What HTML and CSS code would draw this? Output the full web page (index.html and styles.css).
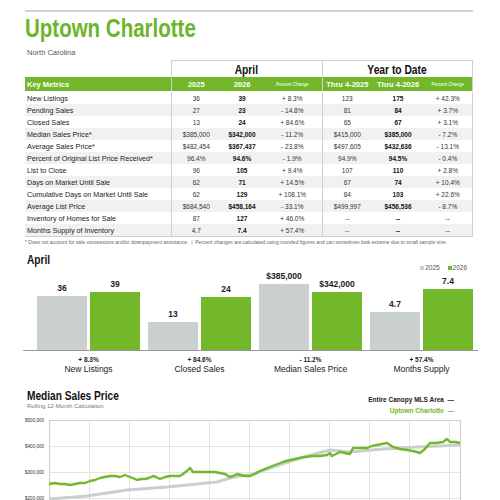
FILE: index.html
```html
<!DOCTYPE html>
<html lang="en">
<head>
    <meta charset="UTF-8">
    <title>Uptown Charlotte</title>
    <link rel="stylesheet" href="styles.css">
</head>
<body>
<div class="page">
    <div class="topline"></div>
    <h1 class="titulo"><span class="cond">Uptown Charlotte</span></h1>
    <div class="estado">North Carolina</div>

    <table class="metricas">
        <colgroup>
            <col class="c-label">
            <col class="c-a1"><col class="c-a2"><col class="c-a3">
            <col class="c-y1"><col class="c-y2"><col class="c-y3">
        </colgroup>
        <tr class="grupo">
            <th class="vacio"></th>
            <th colspan="3" class="caja"><span class="cond">April</span></th>
            <th colspan="3" class="caja"><span class="cond">Year to Date</span></th>
        </tr>
        <tr class="verde">
            <th class="km">Key Metrics</th>
            <th class="izq">2025</th><th>2026</th><th class="pc">Percent Change</th>
            <th class="izq">Thru 4-2025</th><th>Thru 4-2026</th><th class="pc der">Percent Change</th>
        </tr>
        <tr><td class="lbl">New Listings</td><td class="izq">36</td><td class="b">39</td><td>+ 8.3%</td><td class="izq">123</td><td class="b">175</td><td class="der">+ 42.3%</td></tr>
        <tr class="gris"><td class="lbl">Pending Sales</td><td class="izq">27</td><td class="b">23</td><td>- 14.8%</td><td class="izq">81</td><td class="b">84</td><td class="der">+ 3.7%</td></tr>
        <tr><td class="lbl">Closed Sales</td><td class="izq">13</td><td class="b">24</td><td>+ 84.6%</td><td class="izq">65</td><td class="b">67</td><td class="der">+ 3.1%</td></tr>
        <tr class="gris"><td class="lbl">Median Sales Price*</td><td class="izq">$385,000</td><td class="b">$342,000</td><td>- 11.2%</td><td class="izq">$415,000</td><td class="b">$385,000</td><td class="der">- 7.2%</td></tr>
        <tr><td class="lbl">Average Sales Price*</td><td class="izq">$482,454</td><td class="b">$367,437</td><td>- 23.8%</td><td class="izq">$497,605</td><td class="b">$432,636</td><td class="der">- 13.1%</td></tr>
        <tr class="gris"><td class="lbl">Percent of Original List Price Received*</td><td class="izq">96.4%</td><td class="b">94.6%</td><td>- 1.9%</td><td class="izq">94.9%</td><td class="b">94.5%</td><td class="der">- 0.4%</td></tr>
        <tr><td class="lbl">List to Close</td><td class="izq">96</td><td class="b">105</td><td>+ 9.4%</td><td class="izq">107</td><td class="b">110</td><td class="der">+ 2.8%</td></tr>
        <tr class="gris"><td class="lbl">Days on Market Until Sale</td><td class="izq">62</td><td class="b">71</td><td>+ 14.5%</td><td class="izq">67</td><td class="b">74</td><td class="der">+ 10.4%</td></tr>
        <tr><td class="lbl">Cumulative Days on Market Until Sale</td><td class="izq">62</td><td class="b">129</td><td>+ 108.1%</td><td class="izq">84</td><td class="b">103</td><td class="der">+ 22.6%</td></tr>
        <tr class="gris"><td class="lbl">Average List Price</td><td class="izq">$684,540</td><td class="b">$458,164</td><td>- 33.1%</td><td class="izq">$499,997</td><td class="b">$456,536</td><td class="der">- 8.7%</td></tr>
        <tr><td class="lbl">Inventory of Homes for Sale</td><td class="izq">87</td><td class="b">127</td><td>+ 46.0%</td><td class="izq">--</td><td class="b">--</td><td class="der">--</td></tr>
        <tr class="gris ultima"><td class="lbl">Months Supply of Inventory</td><td class="izq">4.7</td><td class="b">7.4</td><td>+ 57.4%</td><td class="izq">--</td><td class="b">--</td><td class="der">--</td></tr>
    </table>
    <p class="nota">* Does not account for sale concessions and/or downpayment assistance. &nbsp;|&nbsp; Percent changes are calculated using rounded figures and can sometimes look extreme due to small sample size.</p>

    <div class="barras-cab">
        <h2 class="sub"><span class="cond">April</span></h2>
        <div class="leyenda"><span class="cuad c25"></span>2025 <span class="cuad c26"></span>2026</div>
    </div>
    <div class="barras">
        <div class="grupo-b">
            <div class="col"><span class="val">36</span><div class="barra b25" style="height:54px"></div></div>
            <div class="col"><span class="val">39</span><div class="barra b26" style="height:58px"></div></div>
        </div>
        <div class="grupo-b">
            <div class="col"><span class="val">13</span><div class="barra b25" style="height:28px"></div></div>
            <div class="col"><span class="val">24</span><div class="barra b26" style="height:53px"></div></div>
        </div>
        <div class="grupo-b">
            <div class="col"><span class="val">$385,000</span><div class="barra b25" style="height:66px"></div></div>
            <div class="col"><span class="val">$342,000</span><div class="barra b26" style="height:58px"></div></div>
        </div>
        <div class="grupo-b">
            <div class="col"><span class="val">4.7</span><div class="barra b25" style="height:38px"></div></div>
            <div class="col"><span class="val">7.4</span><div class="barra b26" style="height:61px"></div></div>
        </div>
    </div>
    <div class="etiquetas">
        <div class="et"><b>+ 8.3%</b><span>New Listings</span></div>
        <div class="et"><b>+ 84.6%</b><span>Closed Sales</span></div>
        <div class="et"><b>- 11.2%</b><span>Median Sales Price</span></div>
        <div class="et"><b>+ 57.4%</b><span>Months Supply</span></div>
    </div>

    <div class="linea-cab">
        <div>
            <h2 class="sub"><span class="cond">Median Sales Price</span></h2>
            <div class="rolling">Rolling 12-Month Calculation</div>
        </div>
        <div class="ley-linea">
            <div class="negro">Entire Canopy MLS Area &nbsp;—</div>
            <div class="verde-t">Uptown Charlotte &nbsp;—</div>
        </div>
    </div>
    <svg class="grafica" width="448" height="90" viewBox="0 0 448 90">
        <g class="ejes">
            <text x="0" y="6">$500,000</text>
            <text x="0" y="32">$400,000</text>
            <text x="0" y="58">$300,000</text>
            <text x="0" y="84">$200,000</text>
        </g>
        <g stroke="#e4e4e4" stroke-width="1">
            <line x1="24" y1="30.5" x2="435" y2="30.5"/>
            <line x1="24" y1="56.5" x2="435" y2="56.5"/>
            <line x1="24" y1="82.5" x2="435" y2="82.5"/>
            <line x1="64.5" y1="4" x2="64.5" y2="90"/>
            <line x1="104.5" y1="4" x2="104.5" y2="90"/>
            <line x1="144.5" y1="4" x2="144.5" y2="90"/>
            <line x1="184.5" y1="4" x2="184.5" y2="90"/>
            <line x1="224.5" y1="4" x2="224.5" y2="90"/>
            <line x1="264.5" y1="4" x2="264.5" y2="90"/>
            <line x1="304.5" y1="4" x2="304.5" y2="90"/>
            <line x1="344.5" y1="4" x2="344.5" y2="90"/>
            <line x1="384.5" y1="4" x2="384.5" y2="90"/>
            <line x1="424.5" y1="4" x2="424.5" y2="90"/>
        </g>
        <g stroke="#cfcfcf" stroke-width="1.2">
            <line x1="24" y1="4.5" x2="435" y2="4.5"/>
            <line x1="24.5" y1="4" x2="24.5" y2="90"/>
            <line x1="435.5" y1="4" x2="435.5" y2="90"/>
        </g>
        <polyline fill="none" stroke="#c9cfcf" stroke-width="3" stroke-linejoin="round"
            points="24,83 62,80 102,74 142,71 162,69 192,66 205,62 215,60 225,59 245,52 275,42 305,34 325,36 358,33 392,31 435,29"/>
        <polyline fill="none" stroke="#72b82a" stroke-width="2.4" stroke-linejoin="round"
            points="24,68 30,67 35,68 40,68 45,69 50,68 55,67 60,67 65,65 70,64 75,62 80,61 85,60 90,60 95,61 100,59 105,61 110,63 112,64 116,63 120,63 124,62 128,60 131,61 135,63 140,61 145,60 150,60 155,60 158,58 162,55 165,52 168,56 172,56 175,56 180,56 185,56 190,56 195,57 200,58 205,61 208,60 212,58 216,59 220,60 225,60 230,58 235,55 240,53 245,51 250,49 258,46 265,44 275,42 280,41 288,40 295,40 302,39 305,37 307,40 311,38 315,36 320,37 325,38 328,32 335,32 342,32 347,30 352,29 357,28 362,27 365,29 368,31 375,33 382,34 388,35 395,37 400,33 405,27 411,27 418,26 422,23 425,26 430,26 435,27"/>
    </svg>
</div>
</body>
</html>
```

FILE: styles.css
```css
body {
    margin: 0;
    background: #fff;
    font-family: "Liberation Sans", Arial, sans-serif;
    color: #222;
}
.page {
    width: 448px;
    margin-left: 25px;
}
.topline {
    height: 2px;
    margin-top: 10px;
    background: #d2d2d2;
}
.cond {
    display: inline-block;
    transform: scaleX(0.78);
    white-space: nowrap;
}
.titulo, .sub {
    font-weight: bold;
    margin: 0;
}
.titulo {
    font-size: 25px;
    line-height: 28px;
    color: #6cb42a;
    margin-top: 2px;
}
.titulo .cond {
    transform: scaleX(0.82);
    transform-origin: left center;
}
.estado {
    font-size: 7.5px;
    color: #555;
    margin-top: 6px;
    margin-left: 2px;
}
.metricas {
    width: 447px;
    border-collapse: collapse;
    table-layout: fixed;
    margin-top: 3px;
    font-size: 6.5px;
}
.c-label { width: 146px; }
.c-a1 { width: 50px; }
.c-a2 { width: 42px; }
.c-a3 { width: 59px; }
.c-y1 { width: 50px; }
.c-y2 { width: 52px; }
.c-y3 { width: 48px; }
.metricas th, .metricas td {
    padding: 0;
    text-align: center;
    white-space: nowrap;
}
.grupo th {
    height: 16px;
    font-size: 13.5px;
    color: #111;
}
.grupo .cond {
    transform: scaleX(0.76);
}
.grupo .caja {
    border: 1px solid #cfcfcf;
    border-bottom: none;
}
.verde th {
    height: 14px;
    background: #72b82a;
    color: #fff;
    font-size: 7.5px;
    border-bottom: 1px solid #fff;
}
.verde .km {
    text-align: left;
    padding-left: 2px;
}
.verde .pc {
    font-size: 4.5px;
    font-weight: normal;
}
.metricas td {
    height: 12px;
    color: #333;
}
.metricas .lbl {
    text-align: left;
    padding-left: 2px;
    font-size: 7.2px;
    color: #222;
}
.metricas .b {
    font-weight: bold;
    color: #111;
}
.metricas .izq { border-left: 1px solid #cfcfcf; }
.metricas .der { border-right: 1px solid #cfcfcf; }
.gris td { background: #f1f1f1; }
.ultima td { border-bottom: 1px solid #cfcfcf; }
.nota {
    margin: 2px 0 0;
    font-size: 5px;
    color: #666;
    white-space: nowrap;
}
.barras-cab {
    display: flex;
    justify-content: space-between;
    align-items: flex-end;
    margin-top: 7px;
}
.sub {
    font-size: 13px;
    line-height: 15px;
    color: #111;
    padding-left: 2px;
}
.sub .cond {
    transform-origin: left center;
}
.leyenda {
    font-size: 6.5px;
    color: #555;
    margin-right: 6px;
    margin-bottom: -4px;
}
.cuad {
    display: inline-block;
    width: 4px;
    height: 4px;
    margin-left: 6px;
    margin-right: 1px;
}
.c25 { background: #c9d0cf; }
.c26 { background: #72b82a; }
.barras {
    display: flex;
    align-items: flex-end;
    gap: 8px;
    height: 83px;
    margin-left: -2px;
    width: 441px;
    padding-left: 14px;
    border-bottom: 1px solid #9a9a9a;
}
.grupo-b {
    display: flex;
    align-items: flex-end;
    gap: 3px;
}
.col {
    width: 50px;
    display: flex;
    flex-direction: column;
    align-items: center;
}
.val {
    font-size: 8.5px;
    font-weight: bold;
    color: #222;
    line-height: 10px;
    margin-bottom: 3px;
}
.barra { width: 50px; }
.b25 { background: #c9d0cf; }
.b26 { background: #72b82a; }
.etiquetas {
    display: flex;
    gap: 8px;
    padding-left: 12px;
    margin-top: 4px;
}
.et {
    width: 103px;
    display: flex;
    flex-direction: column;
    align-items: center;
}
.et b {
    font-size: 6.5px;
    line-height: 9px;
    color: #222;
}
.et span {
    font-size: 8.5px;
    line-height: 11px;
    color: #222;
}
.linea-cab {
    display: flex;
    justify-content: space-between;
    align-items: flex-end;
    margin-top: 13px;
}
.rolling {
    font-size: 6px;
    color: #777;
    padding-left: 2px;
    margin-top: 0;
}
.ley-linea {
    font-size: 6.5px;
    font-weight: bold;
    text-align: right;
    line-height: 11px;
    margin-right: 19px;
    margin-bottom: -7px;
}
.negro { color: #222; }
.verde-t { color: #72b82a; }
.grafica {
    display: block;
    margin-top: 7px;
}
.ejes text {
    font-size: 4.6px;
    fill: #333;
}
```
